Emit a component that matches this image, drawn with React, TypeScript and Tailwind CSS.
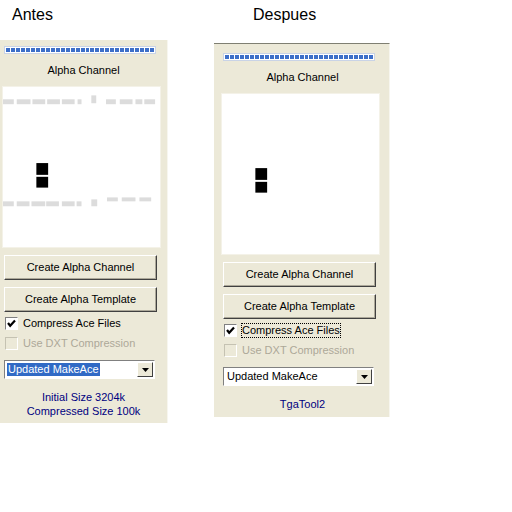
import React from "react";

type PanelProps = {
  selected?: boolean;
  focused?: boolean;
  footer: string[];
  dashes?: boolean;
};

const font = { fontFamily: '"Liberation Sans", Arial, sans-serif' };

const ProgressBar = () => (
  <div className="flex h-[8px] w-[152px] gap-[1px] border border-[#c9d3e6] bg-white px-[1px] py-[1px]">
    {Array.from({ length: 30 }).map((_, i) => (
      <span key={i} className="h-full w-[4px] bg-[#3d6fc9]" />
    ))}
  </div>
);

const Button = ({ label }: { label: string }) => (
  <div className="flex h-[25px] items-center justify-center border border-t-white border-l-white border-r-[#404040] border-b-[#404040] bg-[#ece9d8] text-[11px] text-black shadow-[inset_-1px_-1px_0_#aca899]">
    {label}
  </div>
);

const Check = ({ checked, disabled }: { checked?: boolean; disabled?: boolean }) => (
  <span
    className={
      "flex h-[13px] w-[13px] items-center justify-center border " +
      (disabled
        ? "border-t-[#c5c2b2] border-l-[#c5c2b2] border-r-white border-b-white bg-[#ece9d8]"
        : "border-t-[#808080] border-l-[#808080] border-r-white border-b-white bg-white")
    }
  >
    {checked && (
      <svg width="9" height="9" viewBox="0 0 9 9">
        <path d="M1 4 L3.2 6.8 L8 1.5" stroke="#000" strokeWidth="2.2" fill="none" />
      </svg>
    )}
  </span>
);

// preview canvas with the gray strips and the black marker
const Preview = ({ dashes }: { dashes?: boolean }) => (
  <svg width="100%" height="100%" viewBox="0 0 160 160" className="block">
    {dashes && (
      <g fill="#dcdcdc">
        {[
          [0, 11], [14, 14], [30, 13], [45, 13], [60, 13], [76, 4], [105, 10], [119, 13], [135, 7], [144, 11],
        ].map(([x, w], i) => (
          <rect key={"a" + i} x={x} y={11} width={w} height={5} />
        ))}
        <rect x={90} y={7} width={5} height={8} />
        {[
          [0, 11], [14, 13], [29, 14], [44, 13], [60, 13], [75, 5],
        ].map(([x, w], i) => (
          <rect key={"b" + i} x={x} y={115} width={w} height={5} />
        ))}
        <rect x={90} y={113} width={6} height={7} />
        {[
          [106, 11], [121, 14], [139, 12],
        ].map(([x, w], i) => (
          <rect key={"c" + i} x={x} y={111} width={w} height={4} />
        ))}
      </g>
    )}
    <rect x={34} y={dashes ? 76 : 74} width={12} height={12} fill="#000" />
    <rect x={34} y={dashes ? 90 : 88} width={12} height={11} fill="#000" />
  </svg>
);

const Panel = ({ selected, focused, footer, dashes }: PanelProps) => (
  <div className="flex w-[167px] flex-col bg-[#ece9d8] px-[4px] text-[11px] leading-[13px]" style={font}>
    <ProgressBar />
    <div className="mt-[10px] text-center text-black">Alpha Channel</div>
    <div className="mt-[9px] ml-[-2px] mr-[2px] h-[162px] border border-[#f4f2e8] bg-white">
      <Preview dashes={dashes} />
    </div>
    <div className="mt-[7px] flex flex-col gap-[7px] pr-[6px]">
      <Button label="Create Alpha Channel" />
      <Button label="Create Alpha Template" />
    </div>
    <div className="mt-[5px] flex h-[13px] items-center gap-[5px] pl-[1px] text-black">
      <Check checked />
      <span className={focused ? "outline outline-1 outline-dotted outline-black" : ""}>Compress Ace Files</span>
    </div>
    <div className="mt-[7px] flex h-[13px] items-center gap-[5px] pl-[1px] text-[#aca899]">
      <Check disabled />
      <span>Use DXT Compression</span>
    </div>
    <div className="mt-[10px] mr-[8px] flex h-[19px] items-center border border-t-[#808080] border-l-[#808080] border-r-white border-b-white bg-white">
      <span className={"ml-[2px] px-[1px] " + (selected ? "bg-[#316ac5] text-white" : "text-black")}>
        Updated MakeAce
      </span>
      <span className="ml-auto mr-[1px] flex h-[15px] w-[16px] items-center justify-center border border-t-white border-l-white border-r-[#404040] border-b-[#404040] bg-[#ece9d8]">
        <svg width="7" height="4" viewBox="0 0 7 4">
          <path d="M0 0 H7 L3.5 4 Z" fill="#000" />
        </svg>
      </span>
    </div>
    <div className="mt-[11px] flex flex-col items-center leading-[14px] text-[#000080]">
      {footer.map((line) => (
        <span key={line}>{line}</span>
      ))}
    </div>
  </div>
);

const App = () => {
  return (
    <div className="flex h-[512px] w-[512px] items-start bg-white" style={font}>
      <div className="flex w-[168px] flex-col">
        <div className="h-[40px] pl-[12px] pt-[3px] text-[16px] text-black">Antes</div>
        <div className="border-r border-[#f7f6ef] bg-[#ece9d8] pt-[6px] pb-[5px]">
          <Panel selected dashes footer={["Initial Size 3204k", "Compressed Size 100k"]} />
        </div>
      </div>
      <div className="ml-[46px] flex w-[176px] flex-col">
        <div className="h-[43px] pl-[39px] pt-[3px] text-[16px] text-black">Despues</div>
        <div className="border-t border-r border-t-[#7f7f72] border-r-[#f7f6ef] bg-[#ece9d8] pt-[9px] pb-[6px] pl-[5px]">
          <Panel focused footer={["TgaTool2"]} />
        </div>
      </div>
    </div>
  );
};

export default App;
